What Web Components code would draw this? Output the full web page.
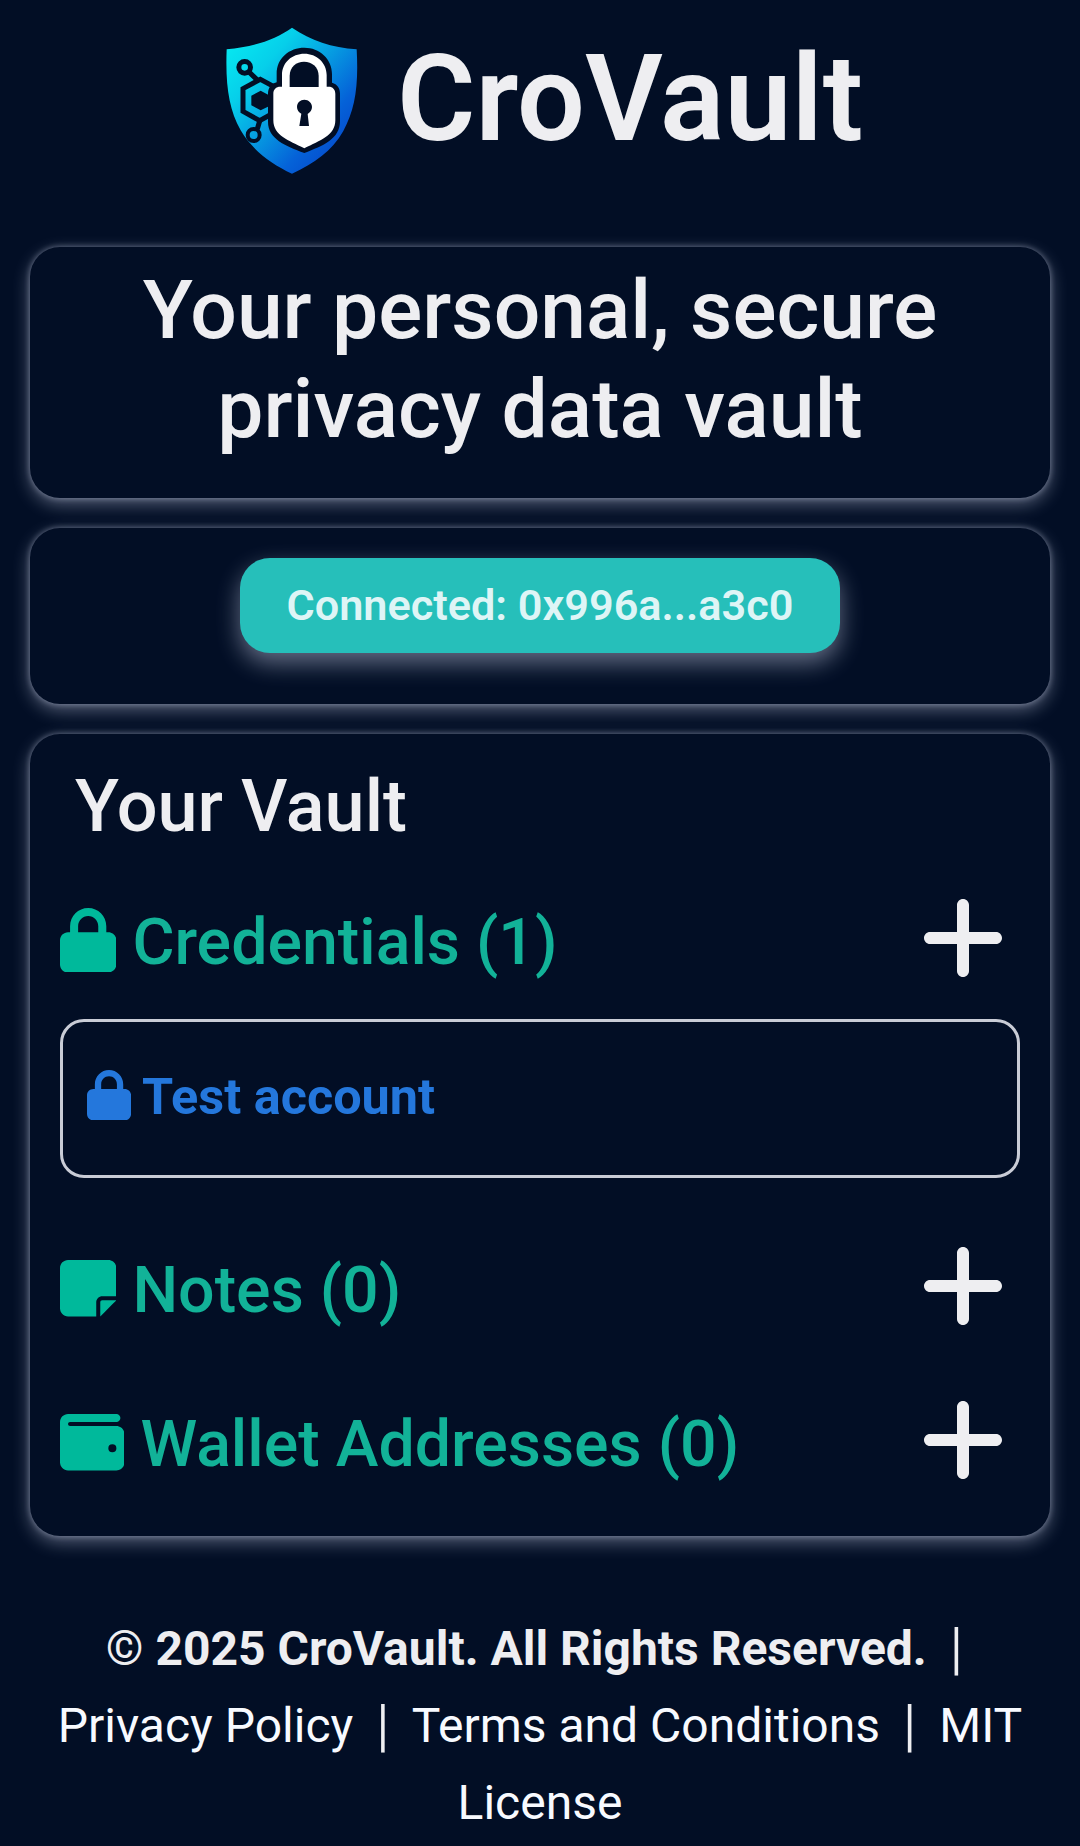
<!DOCTYPE html>
<html lang="en">
<head>
<meta charset="utf-8">
<title>CroVault</title>
<style>
html,body{margin:0;background:#020e25}
body{font-family:Roboto,"Liberation Sans",sans-serif;color:#eeeef1;min-height:1846px;overflow:hidden}
</style>
</head>
<body>
<vault-app></vault-app>
<script>
const define=(name,html)=>customElements.define(name,class extends HTMLElement{
  constructor(){super();this.attachShadow({mode:'open'}).innerHTML=html;}
});

const ICONS={
  lock:['0 0 448 512','M144 144v48H304V144c0-44.2-35.8-80-80-80s-80 35.8-80 80zM80 192V144C80 64.5 144.5 0 224 0s144 64.5 144 144v48h16c35.3 0 64 28.7 64 64V448c0 35.3-28.7 64-64 64H64c-35.3 0-64-28.7-64-64V256c0-35.3 28.7-64 64-64H80z'],
  note:['0 0 448 512','M64 32C28.7 32 0 60.7 0 96V416c0 35.3 28.7 64 64 64H288V368c0-26.5 21.5-48 48-48H448V96c0-35.3-28.7-64-64-64H64zM448 352H402.7 336c-8.8 0-16 7.2-16 16v66.7V480l32-32 64-64 32-32z'],
  wallet:['0 0 512 512','M64 32C28.7 32 0 60.7 0 96V416c0 35.3 28.7 64 64 64H448c35.3 0 64-28.7 64-64V192c0-35.3-28.7-64-64-64H80c-8.8 0-16-7.2-16-16s7.2-16 16-16H448c17.7 0 32-14.3 32-32s-14.3-32-32-32H64zM416 272a32 32 0 1 1 0 64 32 32 0 1 1 0-64z'],
  plus:['0 0 448 512','M256 80c0-17.7-14.3-32-32-32s-32 14.3-32 32V224H48c-17.7 0-32 14.3-32 32s14.3 32 32 32H192V432c0 17.7 14.3 32 32 32s32-14.3 32-32V288H400c17.7 0 32-14.3 32-32s-14.3-32-32-32H256V80z']
};
customElements.define('v-icon',class extends HTMLElement{
  constructor(){super();this.attachShadow({mode:'open'});}
  connectedCallback(){
    const [box,d]=ICONS[this.getAttribute('name')];
    this.shadowRoot.innerHTML=`<style>:host{display:block;flex:none}svg{display:block;height:1em;fill:currentColor}</style><svg viewBox="${box}"><path d="${d}"/></svg>`;
  }
});

define('vault-logo',`<style>:host{display:block;flex:none;width:160px;height:170px}svg{display:block;width:100%;height:100%}</style>
<svg viewBox="0 0 480 510">
  <defs><linearGradient id="g" gradientUnits="userSpaceOnUse" x1="60" y1="100" x2="400" y2="400">
    <stop offset="0" stop-color="#06e6f0"/><stop offset=".25" stop-color="#06cfea"/><stop offset=".5" stop-color="#06a0e2"/><stop offset=".8" stop-color="#0562d8"/><stop offset="1" stop-color="#054ccd"/></linearGradient></defs>
  <path fill="url(#g)" d="M246 38C302 76 366 98 440 103C446 210 436 282 400 348C366 408 312 446 246 476C182 446 126 404 92 346C56 280 46 210 50 103C130 96 196 74 246 38z"/>
  <g fill="none" stroke="#020e25" stroke-width="15">
    <circle cx="104" cy="157" r="17.5"/><path d="M116 170L144 197M149 318L142 342"/>
    <path d="M196 217L151 193L99 221V289L149 317L196 291"/>
    <circle cx="131" cy="360" r="18" stroke-width="12"/>
  </g>
  <path fill="#020e25" d="M152 227L180 242L206 242V272L180 272L152 286L124 271V242z"/>
  <path fill="#020e25" d="M200 202V176C200 129 238 98 283 98C328 98 366 131 366 177V203C382 207 390 220 390 236V318C390 372 340 392 283 414C226 392 174 372 174 320V238C174 220 182 206 200 202z"/>
  <path fill="#fff" d="M190 236C190 223 198 215 211 215H216V180C216 142 246 116 283 116C320 116 350 143 350 180V215H356C368 215 376 223 376 236V316C376 362 330 376 283 400C236 376 190 362 190 316z"/>
  <path fill="#020e25" d="M239 216V183C239 155 259 140 282 140C306 140 326 156 326 183V216z"/>
  <path fill="#020e25" d="M274 296C266 292 261 285 261 276C261 263 271 254 283 254C296 254 306 264 306 276C306 285 301 292 293 297L297 333H268z"/>
</svg>`);

define('vault-header',`<style>:host{display:flex;align-items:center;height:170px;padding:15px 0 0 210px}
h1{margin:-3px 0 0 27px;font-size:120px;line-height:144px;font-weight:600;white-space:nowrap}</style>
<vault-logo></vault-logo><h1><slot></slot></h1>`);

define('vault-card',`<style>:host{display:block;box-sizing:border-box;margin:0 30px 30px;border-radius:30px;background:#020e25;box-shadow:0 6px 18px rgba(225,232,255,.38),0 0 6px rgba(225,232,255,.4)}</style><slot></slot>`);

define('vault-tagline',`<style>:host{display:block;box-sizing:border-box;height:251px;padding-top:14px;text-align:center;font-size:82.2px;line-height:98.64px;font-weight:500}</style><slot></slot>`);

define('wallet-status',`<style>:host{display:flex;justify-content:center;height:146px;padding-top:30px}
button{box-sizing:border-box;width:600px;height:95px;padding:0;border:0;border-radius:30px;background:#26bfba;color:#def5f6;font:600 43.2px/95px Roboto,sans-serif;white-space:nowrap;box-shadow:0 10px 24px rgba(225,232,255,.44)}</style>
<button><slot></slot></button>`);

define('vault-title',`<style>:host{display:block;padding:29px 0 0 45px;font-size:72px;line-height:88px;font-weight:500}</style><slot></slot>`);

define('vault-section',`<style>:host{display:flex;align-items:center;height:96px;padding:0 45px 0 30px;color:#12b298}
.i{font-size:64.44px;color:#00b99b;margin-top:4px}
.t{flex:1;margin:8px 0 0 16px;font-size:64.44px;line-height:77px;font-weight:500;white-space:nowrap}
.p{font-size:96px;color:#eeeef1}</style>
<div class="i"><slot name="icon"></slot></div><div class="t"><slot></slot></div><v-icon class="p" name="plus"></v-icon>`);

define('vault-entry',`<style>:host{display:flex;align-items:flex-start;box-sizing:border-box;height:159px;margin:0 30px;padding:48px 0 0 24px;border:3px solid #c9ccd6;border-radius:24px;color:#2477dc;font-size:50.4px;font-weight:700}
span{margin-left:11px;line-height:54px;white-space:nowrap}</style>
<v-icon name="lock"></v-icon><span><slot></slot></span>`);

define('vault-footer',`<style>:host{display:block;text-align:center;font-size:48px;line-height:77px}
div{white-space:nowrap}b{font-weight:700}a{color:#f8faff}i{display:inline-block;font-style:normal;transform:scaleY(1.18)}</style>
<div>© <b>2025 CroVault. All Rights Reserved.</b> &nbsp;<i>|</i>&nbsp;</div>
<div><a>Privacy Policy</a> &nbsp;<i>|</i>&nbsp; <a>Terms and Conditions</a> &nbsp;<i>|</i>&nbsp; <a>MIT</a></div>
<div><a>License</a></div>`);

define('vault-app',`<style>:host{display:block}
vault-header{margin-bottom:62px}
.list{height:802px}
vault-section{box-sizing:border-box}
vault-footer{margin-top:74px}</style>
<vault-header>CroVault</vault-header>
<vault-card><vault-tagline>Your personal, secure<br>privacy data vault</vault-tagline></vault-card>
<vault-card><wallet-status>Connected: 0x996a...a3c0</wallet-status></vault-card>
<vault-card class="list">
  <vault-title>Your Vault</vault-title>
  <vault-section style="margin-top:39px"><v-icon slot="icon" name="lock"></v-icon>Credentials (1)</vault-section>
  <vault-entry style="margin-top:33px">Test account</vault-entry>
  <vault-section style="margin-top:60px"><v-icon slot="icon" name="note"></v-icon>Notes (0)</vault-section>
  <vault-section style="margin-top:58px"><v-icon slot="icon" name="wallet"></v-icon>Wallet Addresses (0)</vault-section>
</vault-card>
<vault-footer></vault-footer>`);
</script>
</body>
</html>
